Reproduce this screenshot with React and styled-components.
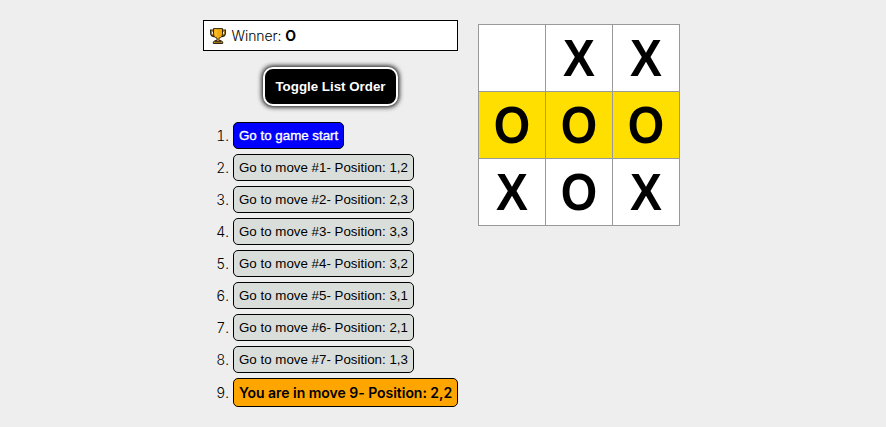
import React from 'react';
import styled, { createGlobalStyle, css } from 'styled-components';

const GlobalStyle = createGlobalStyle`
  * { box-sizing: border-box; }
  body {
    margin: 0;
    background: #eeeeee;
    color: #000;
    font: 14px Inter, sans-serif;
  }
`;

const Game = styled.main`
  display: flex;
  align-items: flex-start;
  gap: 20px;
  padding: 20px 0 0 203px;
`;

const Info = styled.section`
  width: 255px;
  display: flex;
  flex-direction: column;
`;

const Status = styled.div`
  display: flex;
  align-items: center;
  height: 31px;
  padding: 0 6px;
  border: 1px solid #000;
  background: #fff;
  white-space: pre;
  font-weight: 350;
  letter-spacing: -0.08px;
`;

const Winner = styled.b`
  font-weight: 700;
`;

const Trophy = styled.svg`
  width: 16px;
  height: 16px;
  margin-right: 5.5px;
`;

const ToggleButton = styled.button`
  align-self: center;
  width: 135px;
  height: 39px;
  margin: 16px 0 0;
  padding: 0;
  border: 2px solid #fff;
  border-radius: 10px;
  background: #000;
  color: #fff;
  box-shadow: 0 0 5px 1px #000;
  font: bold 13.333px "Liberation Sans", Arial, sans-serif;
  white-space: nowrap;
`;

const Moves = styled.ol`
  display: flex;
  flex-direction: column;
  gap: 5px;
  margin: 16px 0 0;
  padding: 0;
  list-style: none;
`;

const Move = styled.li`
  display: grid;
  grid-template-columns: 26px max-content;
  column-gap: 4px;
  align-items: center;
`;

const MoveNumber = styled.span`
  text-align: right;
  font-weight: 350;
  font-variant-numeric: tabular-nums;
`;

const moveColors = {
  start: css`
    background: #0000ff;
    color: #fff;
    -webkit-text-stroke: 0.35px #fff;
  `,
  past: css`
    background: #d9dedb;
  `,
  current: css`
    height: 29px;
    background: #ffa500;
    font: 600 14px Inter, sans-serif;
    letter-spacing: -0.03px;
  `,
};

const MoveButton = styled.button`
  height: 27px;
  padding: 0 5px;
  border: 1px solid #000;
  border-radius: 5px;
  color: #000;
  font: 13.333px "Liberation Sans", Arial, sans-serif;
  white-space: nowrap;
  ${({ $kind }) => moveColors[$kind]}
`;

const Board = styled.section`
  display: grid;
  grid-template-columns: repeat(3, 67px);
  grid-auto-rows: 67px;
  margin-top: 4px;
  border: solid #999;
  border-width: 1px 0 0 1px;
`;

const Square = styled.button`
  padding: 0;
  border: solid #999;
  border-width: 0 1px 1px 0;
  background: ${({ $winning }) => ($winning ? '#ffdf00' : '#fff')};
  color: #000;
  font: bold 52px/66px "Liberation Sans", Arial, sans-serif;
`;

const Mark = styled.span`
  display: block;
  transform: scaleX(${({ $mark }) => ($mark === 'O' ? 0.9 : 0.92)});
`;

const positions = ['1,2', '2,3', '3,3', '3,2', '3,1', '2,1', '1,3'];
const moves = [
  { kind: 'start', label: 'Go to game start' },
  ...positions.map((position, i) => ({
    kind: 'past',
    label: `Go to move #${i + 1}- Position: ${position}`,
  })),
  { kind: 'current', label: 'You are in move 9- Position: 2,2' },
];
const squares = ['', 'X', 'X', 'O', 'O', 'O', 'X', 'O', 'X'];
const winningLine = [3, 4, 5];

function TrophyIcon() {
  return (
    <Trophy viewBox="0 0 16 16" aria-hidden="true">
      <path d="M4 2.5H1v2.2C1 7 2.6 8.2 5 8.2M12 2.5h3v2.2c0 2.3-1.6 3.5-4 3.5" fill="none" stroke="#2b2416" strokeWidth="2" />
      <path d="M4 2.8H1.4v2c0 1.8 1.3 2.8 3.3 2.8M12 2.8h2.6v2c0 1.8-1.3 2.8-3.3 2.8" fill="none" stroke="#e6a00c" strokeWidth=".8" />
      <path d="M3.5.6h9v5.1c0 2.5-1.4 4-3.5 4.5v2.4h2.2v1.2h1.5v1.7H3.3v-1.7h1.5v-1.2H7v-2.4c-2.1-.5-3.5-2-3.5-4.5Z" fill="#f5ac0d" stroke="#2b2416" strokeWidth="1" />
      <path d="M5 13h6v1.5H5Z" fill="#49391e" />
      <path d="M5.4 1.5v4.4c0 1.2.4 2 1.2 2.6V1.5Z" fill="#ffc83d" />
    </Trophy>
  );
}

export default function App() {
  return (
    <>
      <GlobalStyle />
      <Game>
        <Info>
          <Status><TrophyIcon />Winner: <Winner>O</Winner></Status>
          <ToggleButton>Toggle List Order</ToggleButton>
          <Moves>
            {moves.map(({ kind, label }, i) => (
              <Move key={label}>
                <MoveNumber>{i + 1}.</MoveNumber>
                <MoveButton $kind={kind}>{label}</MoveButton>
              </Move>
            ))}
          </Moves>
        </Info>
        <Board>
          {squares.map((mark, i) => (
            <Square key={i} $winning={winningLine.includes(i)}>
              <Mark $mark={mark}>{mark}</Mark>
            </Square>
          ))}
        </Board>
      </Game>
    </>
  );
}
